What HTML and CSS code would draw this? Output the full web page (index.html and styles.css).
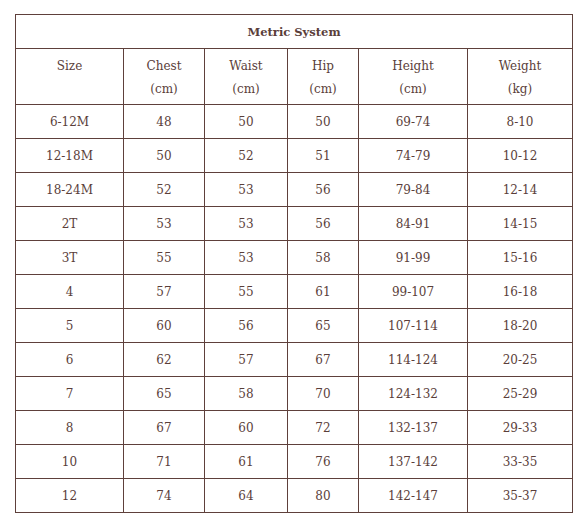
FILE: index.html
```html
<!DOCTYPE html>
<html>
<head>
<meta charset="utf-8">
<link rel="stylesheet" href="styles.css">
</head>
<body>
<div class="wrap">
<table class="chart">
<colgroup>
<col class="c1"><col class="c2"><col class="c3"><col class="c4"><col class="c5"><col class="c6">
</colgroup>
<thead>
<tr class="title"><th colspan="6">Metric System</th></tr>
<tr class="head">
<td>Size</td>
<td>Chest<br>(cm)</td>
<td>Waist<br>(cm)</td>
<td>Hip<br>(cm)</td>
<td>Height<br>(cm)</td>
<td>Weight<br>(kg)</td>
</tr>
</thead>
<tbody>
<tr><td>6-12M</td><td>48</td><td>50</td><td>50</td><td>69-74</td><td>8-10</td></tr>
<tr><td>12-18M</td><td>50</td><td>52</td><td>51</td><td>74-79</td><td>10-12</td></tr>
<tr><td>18-24M</td><td>52</td><td>53</td><td>56</td><td>79-84</td><td>12-14</td></tr>
<tr><td>2T</td><td>53</td><td>53</td><td>56</td><td>84-91</td><td>14-15</td></tr>
<tr><td>3T</td><td>55</td><td>53</td><td>58</td><td>91-99</td><td>15-16</td></tr>
<tr><td>4</td><td>57</td><td>55</td><td>61</td><td>99-107</td><td>16-18</td></tr>
<tr><td>5</td><td>60</td><td>56</td><td>65</td><td>107-114</td><td>18-20</td></tr>
<tr><td>6</td><td>62</td><td>57</td><td>67</td><td>114-124</td><td>20-25</td></tr>
<tr><td>7</td><td>65</td><td>58</td><td>70</td><td>124-132</td><td>25-29</td></tr>
<tr><td>8</td><td>67</td><td>60</td><td>72</td><td>132-137</td><td>29-33</td></tr>
<tr><td>10</td><td>71</td><td>61</td><td>76</td><td>137-142</td><td>33-35</td></tr>
<tr><td>12</td><td>74</td><td>64</td><td>80</td><td>142-147</td><td>35-37</td></tr>
</tbody>
</table>
</div>
</body>
</html>
```
FILE: styles.css
```css
html, body {
  margin: 0;
  padding: 0;
  background: #ffffff;
}
.wrap {
  padding: 14px 0 0 15px;
}
.chart {
  border-collapse: collapse;
  table-layout: fixed;
  width: 557px;
  font-family: "DejaVu Serif", serif;
  font-size: 12px;
  color: #5a3e3a;
}
.c1 { width: 108px; }
.c2 { width: 81px; }
.c3 { width: 83px; }
.c4 { width: 71px; }
.c5 { width: 109px; }
.c6 { width: 105px; }
.chart th,
.chart td {
  border: 1px solid #5e403b;
  text-align: center;
  padding: 1px 4px 0;
  line-height: 23px;
}
.title th {
  height: 32px;
  font-weight: bold;
  font-size: 11.5px;
  vertical-align: middle;
}
.head td {
  height: 56px;
  vertical-align: top;
  padding-top: 6px;
  box-sizing: border-box;
}
tbody td {
  height: 32px;
  vertical-align: middle;
}
```
